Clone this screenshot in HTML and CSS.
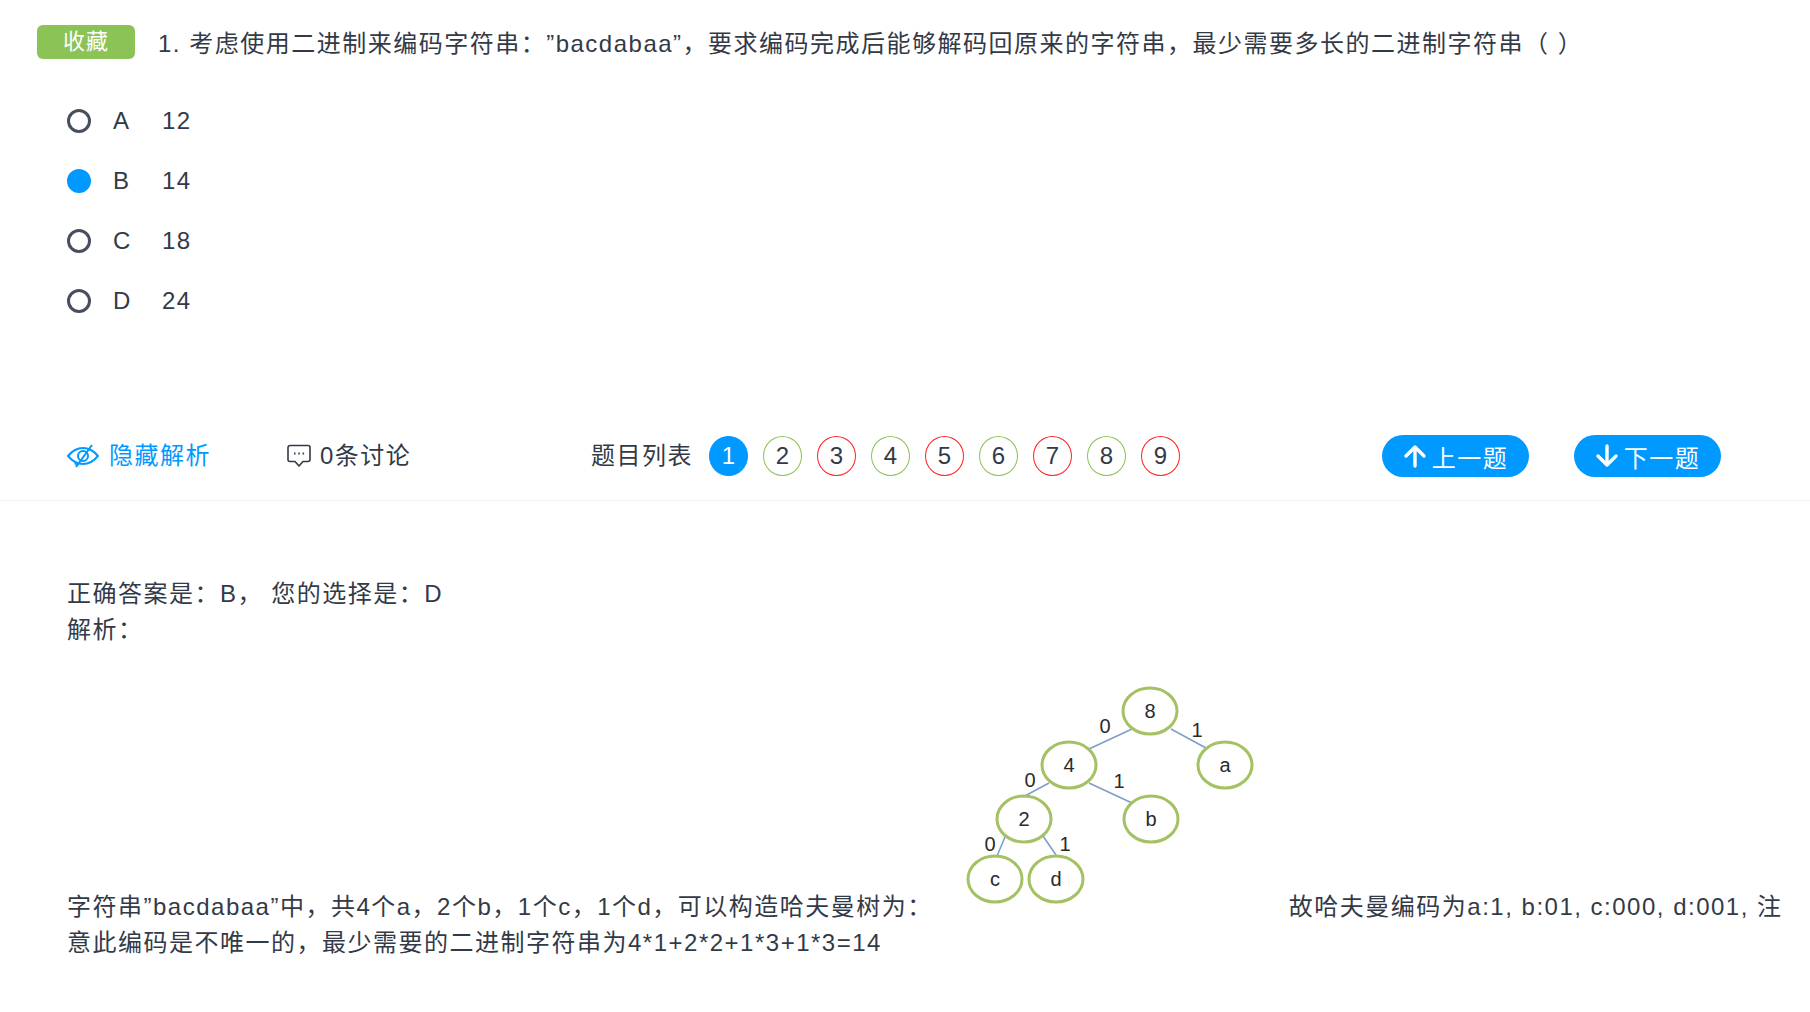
FILE: index.html
```html
<!DOCTYPE html>
<html lang="zh-CN">
<head>
    <meta charset="UTF-8">
    <title>题目解析</title>
    <link rel="stylesheet" href="styles.css">
</head>
<body>

<div class="question">
    <span class="collect">收藏</span>
    <span class="title">1. 考虑使用二进制来编码字符串：”bacdabaa”，要求编码完成后能够解码回原来的字符串，最少需要多长的二进制字符串（ ）</span>
</div>

<div class="options">
    <div class="option"><span class="radio"></span><span class="letter">A</span><span>12</span></div>
    <div class="option"><span class="radio checked"></span><span class="letter">B</span><span>14</span></div>
    <div class="option"><span class="radio"></span><span class="letter">C</span><span>18</span></div>
    <div class="option"><span class="radio"></span><span class="letter">D</span><span>24</span></div>
</div>

<div class="toolbar">
    <div class="hide-btn">
        <svg viewBox="0 0 32 24" width="32" height="24" fill="none" stroke="#0099ff" stroke-width="2">
            <path d="M1 12C6 6 11 4 16 4s10 2 15 8c-5 6-10 8-15 8S6 18 1 12z"/>
            <circle cx="16" cy="12" r="5"/>
            <path d="M25 1 9 23M8 19l3 3"/>
        </svg>
        <span>隐藏解析</span>
    </div>
    <div class="discuss">
        <svg viewBox="0 0 24 24" width="24" height="24" fill="none" stroke="#333a47" stroke-width="1.6" stroke-linejoin="round">
            <path d="M3 1.500h18a2 2 0 0 1 2 2v12a2 2 0 0 1-2 2h-5l-4 4.500-4-4.500H3a2 2 0 0 1-2-2v-12a2 2 0 0 1 2-2z"/>
            <path d="M7 9.500h1.500M11.300 9.500h1.500M15.600 9.500h1.500" stroke-width="2"/>
        </svg>
        <span>0条讨论</span>
    </div>
    <div class="list-label"><span>题目列表</span></div>
    <div class="numbers">
        <span class="num current">1</span>
        <span class="num right">2</span>
        <span class="num wrong">3</span>
        <span class="num right">4</span>
        <span class="num wrong">5</span>
        <span class="num right">6</span>
        <span class="num wrong">7</span>
        <span class="num right">8</span>
        <span class="num wrong">9</span>
    </div>
    <div class="nav">
        <div class="nav-btn">
            <svg viewBox="0 0 24 24" width="24" height="24" fill="none" stroke="#fff" stroke-width="3.4" stroke-linecap="round" stroke-linejoin="round">
                <path d="M12 22V3M3 12l9-9 9 9"/>
            </svg>
            <span>上一题</span>
        </div>
        <div class="nav-btn">
            <svg viewBox="0 0 24 24" width="24" height="24" fill="none" stroke="#fff" stroke-width="3.4" stroke-linecap="round" stroke-linejoin="round">
                <path d="M12 2v19M3 12l9 9 9-9"/>
            </svg>
            <span>下一题</span>
        </div>
    </div>
</div>

<div class="analysis">
    <div>正确答案是：B， 您的选择是：D</div>
    <div>解析：</div>
    <div>字符串”bacdabaa”中，共4个a，2个b，1个c，1个d，可以构造哈夫曼树为：<svg class="tree" viewBox="9 0 356 245" width="356" height="245">
            <g stroke="#7f9fcb" stroke-width="1.6">
                <path d="M208 59 165 79M247 59 282 78M125 113 99 127M165 113 208 133M81 167 73 186M119 166 132 185"/>
            </g>
            <g fill="none" stroke="#a4c263" stroke-width="3">
                <ellipse cx="226" cy="41" rx="27" ry="23"/>
                <ellipse cx="145" cy="95" rx="27" ry="23"/>
                <ellipse cx="301" cy="95" rx="27" ry="23"/>
                <ellipse cx="100" cy="149" rx="27" ry="23"/>
                <ellipse cx="227" cy="149" rx="27" ry="23"/>
                <ellipse cx="71" cy="209" rx="27" ry="23"/>
                <ellipse cx="132" cy="209" rx="27" ry="23"/>
            </g>
            <g class="tree-text" text-anchor="middle">
                <text x="226" y="48">8</text>
                <text x="145" y="102">4</text>
                <text x="301" y="102">a</text>
                <text x="100" y="156">2</text>
                <text x="227" y="156">b</text>
                <text x="71" y="216">c</text>
                <text x="132" y="216">d</text>
                <text x="181" y="63">0</text>
                <text x="273" y="67">1</text>
                <text x="106" y="117">0</text>
                <text x="195" y="118">1</text>
                <text x="66" y="181">0</text>
                <text x="141" y="181">1</text>
            </g>
        </svg>故哈夫曼编码为a:1, b:01, c:000, d:001, 注意此编码是不唯一的，最少需要的二进制字符串为4*1+2*2+1*3+1*3=14</div>
</div>

</body>
</html>
```

FILE: styles.css
```css
body {
    margin: 0;
    background: #fff;
    color: #333a47;
    font-family: "Liberation Sans", "Noto Sans CJK SC", sans-serif;
    font-size: 24px;
    letter-spacing: 1.5px;
    text-spacing-trim: space-all;
}

.question {
    display: flex;
    align-items: center;
    height: 34px;
    padding: 25px 0 0 37px;
}

.collect {
    width: 98px;
    height: 34px;
    margin-right: 23px;
    border-radius: 6px;
    background: #8bc356;
    color: #fff;
    font-size: 22px;
    letter-spacing: 1px;
    line-height: 34px;
    text-align: center;
}

.title {
    margin-bottom: 2px;
    white-space: nowrap;
}

.options {
    padding: 32px 0 0 67px;
}

.option {
    display: flex;
    align-items: center;
    height: 60px;
}

.radio {
    box-sizing: border-box;
    width: 24px;
    height: 24px;
    margin-right: 22px;
    border: 3px solid #474f5e;
    border-radius: 50%;
}

.radio.checked {
    border-color: #0099ff;
    background: #0099ff;
}

.letter {
    width: 49px;
}

.toolbar {
    display: flex;
    align-items: center;
    height: 88px;
    margin-top: 81px;
    padding-left: 67px;
    border-bottom: 1px solid #eef0f5;
}

.hide-btn {
    display: flex;
    align-items: center;
    gap: 10px;
    width: 220px;
    color: #0099ff;
}

.discuss {
    display: flex;
    align-items: center;
    gap: 9px;
    width: 304px;
}

.hide-btn span,
.discuss span,
.list-label span {
    position: relative;
    top: -3px;
}

.list-label {
    width: 118px;
}

.numbers {
    display: flex;
    gap: 15px;
}

.num {
    box-sizing: border-box;
    width: 39px;
    height: 40px;
    border: 1px solid;
    border-radius: 50%;
    letter-spacing: 0;
    line-height: 38px;
    text-align: center;
}

.num.current {
    border-color: #0099ff;
    background: #0099ff;
    color: #fff;
}

.num.right {
    border-color: #8bc356;
}

.num.wrong {
    border-color: #f22;
}

.nav {
    display: flex;
    gap: 45px;
    margin-left: auto;
    padding-right: 89px;
}

.nav-btn {
    display: flex;
    align-items: center;
    justify-content: center;
    gap: 5px;
    width: 147px;
    height: 42px;
    border-radius: 21px;
    background: #0099ff;
    color: #fff;
}

.analysis {
    padding: 75px 6px 0 67px;
    line-height: 36px;
}

.tree {
    margin-top: 22px;
}

.tree-text {
    fill: #2b2b2b;
    font-family: "Liberation Sans", sans-serif;
    font-size: 20px;
    letter-spacing: 0;
}
```
